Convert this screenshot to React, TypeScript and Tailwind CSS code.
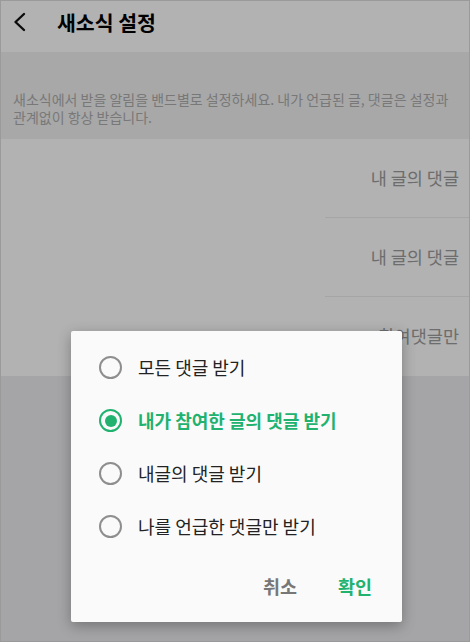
const font = { fontFamily: '"Noto Sans CJK KR", "Noto Sans", sans-serif' };

const options = [
  "모든 댓글 받기",
  "내가 참여한 글의 댓글 받기",
  "내글의 댓글 받기",
  "나를 언급한 댓글만 받기",
];

function Radio({ checked }: { checked: boolean }) {
  if (checked) {
    return (
      <span className="w-[23px] h-[23px] rounded-full border-[2.5px] border-[#21b26f] flex items-center justify-center shrink-0">
        <span className="w-[12px] h-[12px] rounded-full bg-[#21b26f]" />
      </span>
    );
  }
  return <span className="w-[23px] h-[23px] rounded-full border-2 border-[#8e8e8e] shrink-0" />;
}

export default function App() {
  const selected = 1;
  return (
    <div
      className="relative w-[470px] h-[642px] overflow-hidden bg-[#ececef] flex flex-col"
      style={font}
    >
      {/* header */}
      <header className="h-[52px] bg-white flex items-center pb-[9px] shrink-0">
        <svg width="36" height="20" viewBox="0 0 36 20" className="ml-[4px]">
          <path
            d="M20 2 L11.5 10 L20 18"
            fill="none"
            stroke="#111"
            strokeWidth="2.4"
            strokeLinecap="round"
            strokeLinejoin="round"
          />
        </svg>
        <h1 className="ml-[17px] text-[20.5px] font-bold text-black leading-6">새소식 설정</h1>
      </header>

      {/* description */}
      <div className="bg-[#f1f1f1] pt-[38px] pb-[13px] px-[13px] shrink-0">
        <p className="text-[14px] leading-[18px] text-[#adadad]">
          새소식에서 받을 알림을 밴드별로 설정하세요. 내가 언급된 글, 댓글은 설정과 관계없이 항상 받습니다.
        </p>
      </div>

      {/* list */}
      <div className="bg-white flex flex-col shrink-0">
        {["내 글의 댓글", "내 글의 댓글", "참여댓글만"].map((t, i) => (
          <div key={i} className="h-[79px] flex pl-[325px]">
            <div
              className={
                "flex-1 flex items-center justify-end pr-[11px] " +
                (i < 2 ? "border-b border-[#ececec]" : "")
              }
            >
              <span className="text-[17.5px] text-[#9c9c9c]">{t}</span>
            </div>
          </div>
        ))}
      </div>

      {/* dim overlay */}
      <div className="absolute inset-0 bg-black/30 border border-[#9a9a9a]" />

      {/* dialog */}
      <div className="absolute left-[71px] top-[331px] w-[331px] h-[291px] bg-[#fafafa] rounded-[2px] shadow-[0_4px_14px_rgba(0,0,0,0.3)] flex flex-col pt-[10px]">
        {options.map((o, i) => (
          <div key={o} className="h-[53px] flex items-center pl-[28px] gap-[16px]">
            <Radio checked={i === selected} />
            <span
              className={
                "text-[18px] " +
                (i === selected ? "font-bold text-[#21b26f]" : "text-[#222]")
              }
            >
              {o}
            </span>
          </div>
        ))}
        <div className="h-[68px] flex items-center justify-end pr-[30px] gap-[41px]">
          <button className="text-[18.5px] font-bold text-[#777]">취소</button>
          <button className="text-[18.5px] font-bold text-[#21b26f]">확인</button>
        </div>
      </div>
    </div>
  );
}
